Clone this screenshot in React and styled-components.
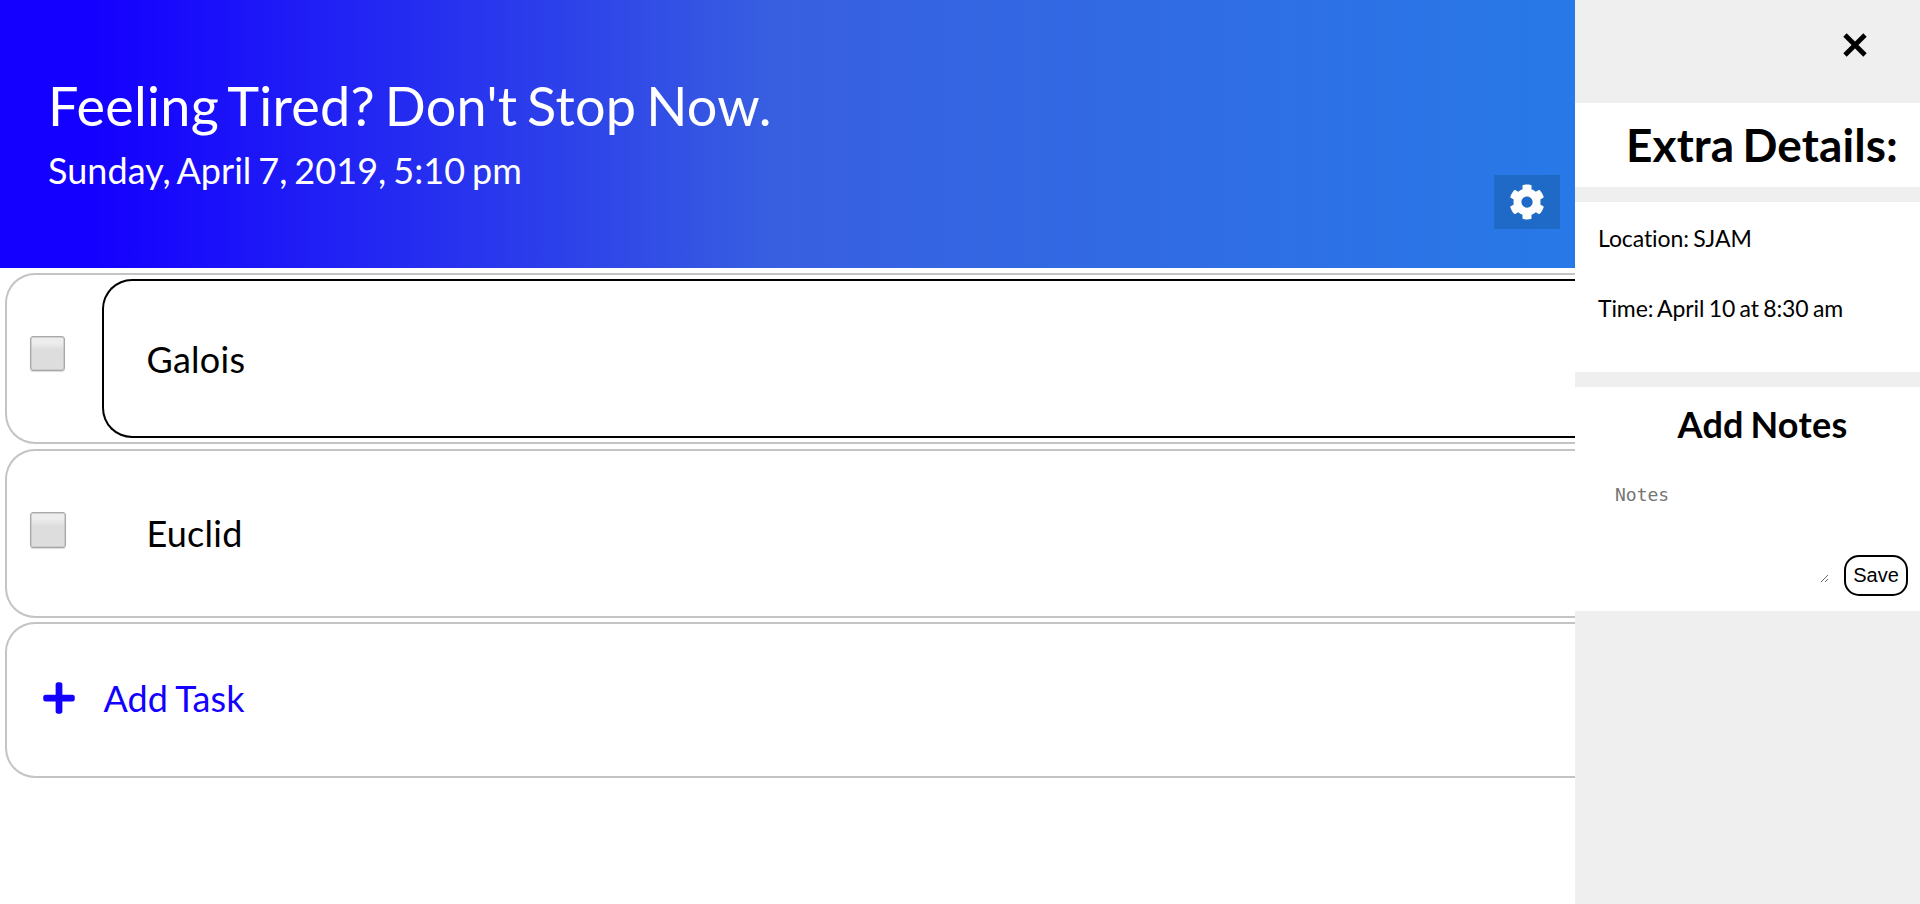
import React from "react";
import styled, { createGlobalStyle } from "styled-components";
import { FaCog, FaPlus } from "react-icons/fa";

const GlobalStyle = createGlobalStyle`
  * { box-sizing: border-box; }
  body { margin: 0; background: #fff; color: #000; font-family: Lato, sans-serif; font-variant-ligatures: none; word-spacing: -0.065em; }
  h1, h2, h3, p { margin: 0; }
`;

const Page = styled.div`
  display: flex;
  height: 904px;
  overflow: hidden;
`;

const Main = styled.main`
  flex: 0 0 1575px;
  overflow: hidden;
`;

const Header = styled.header`
  display: flex;
  justify-content: space-between;
  height: 268px;
  padding: 73px 15px 0 48px;
  color: #fff;
  background: linear-gradient(to right, #1400ff 0, #1400ff 96px, #385fe0 776px, #2879e8 1575px);
`;

const Title = styled.h1`
  font-size: 54px;
  font-weight: 400;
  line-height: 65px;
  letter-spacing: 0.27px;
  word-spacing: -0.08em;
  white-space: nowrap;
`;

const DateLine = styled.p`
  margin-top: 10px;
  font-size: 36px;
  line-height: 44px;
  letter-spacing: 0.05px;
  word-spacing: -0.065em;
`;

const SettingsButton = styled.button`
  display: flex;
  align-items: center;
  justify-content: center;
  width: 66px;
  height: 54px;
  margin-top: 102px;
  padding: 0 0 1px;
  border: 0;
  color: #fff;
  background: #1f6ac6;
  font-size: 36px;
`;

const List = styled.div`
  display: flex;
  flex-direction: column;
  padding: 5px 0 0 5px;
`;

const Row = styled.div`
  display: flex;
  align-items: flex-start;
  height: ${(p) => p.$height}px;
  margin-bottom: ${(p) => p.$gap || 0}px;
  border: 2px solid #c4c4c4;
  border-right: 0;
  border-radius: 30px 0 0 30px;
`;

const Checkbox = styled.span`
  flex: none;
  width: ${(p) => p.$size}px;
  height: ${(p) => p.$size}px;
  margin: 61px 0 0 23px;
  border: 1px solid #a9a9a9;
  border-radius: 3px;
  background: linear-gradient(#ededed, #ededed 18%, #dcdcdc 40%, #dedede);
  box-shadow: inset 0 0 0 0.5px #b5b5b5, 0 1px 1px rgba(0, 0, 0, 0.15);
`;

const Task = styled.div`
  flex: 1;
  height: 159px;
  margin: 4px 0 0 ${(p) => p.$left}px;
  padding: ${(p) => p.$top}px 0 0 42.5px;
  border: 2px solid ${(p) => (p.$active ? "#000" : "transparent")};
  border-right: 0;
  border-radius: 30px 0 0 30px;
  font-size: 36px;
  letter-spacing: 0.25px;
  line-height: 44px;
`;

const AddTask = styled.div`
  display: flex;
  align-items: center;
  gap: 27px;
  padding: 52px 0 0 33.5px;
  color: #1400ff;
  font-size: 36px;
  line-height: 44px;
  letter-spacing: 0.1px;
`;

const Sidebar = styled.aside`
  display: flex;
  flex: 1;
  flex-direction: column;
  gap: 15px;
  background: #efefef;
`;

const CloseBar = styled.div`
  display: flex;
  justify-content: flex-end;
  height: 88px;
  padding: 33px 53px 0 0;
`;

const CloseIcon = () => (
  <svg width="24" height="24" viewBox="0 0 24 24" fill="none" stroke="#000" strokeWidth="4.8">
    <path d="M2 2 22 22M22 2 2 22" />
  </svg>
);

const Panel = styled.section`
  height: ${(p) => p.$height}px;
  background: #fff;
`;

const PanelTitle = styled.h2`
  padding: 15px 22px 0 0;
  font-size: 46px;
  font-weight: 700;
  line-height: 54px;
  letter-spacing: 0.1px;
  word-spacing: -0.065em;
  text-align: right;
`;

const Detail = styled.p`
  padding: 24px 0 22px 23px;
  font-size: 23px;
  line-height: 24px;
  letter-spacing: -0.08px;
  word-spacing: -0.065em;
`;

const NotesTitle = styled.h3`
  padding: 15px 0 0 30px;
  font-size: 36px;
  line-height: 44px;
  letter-spacing: 0.25px;
  word-spacing: -0.065em;
  text-align: center;
`;

const NotesForm = styled.div`
  display: flex;
  align-items: flex-end;
  padding: 33px 12px 0 35px;
`;

const NotesInput = styled.textarea`
  width: 219px;
  height: 104px;
  margin-bottom: 13px;
  padding: 4px 5px;
  border: 0;
  outline: 0;
  background: transparent;
  font: 18px/24px "DejaVu Sans Mono", monospace;
  &::placeholder { color: #757575; }
`;

const SaveButton = styled.button`
  width: 64px;
  height: 41px;
  margin-left: auto;
  padding: 0;
  border: 2px solid #000;
  border-radius: 15px;
  color: #000;
  background: #fff;
  font: 20px "Liberation Sans", sans-serif;
`;

export default function App() {
  return (
    <>
      <GlobalStyle />
      <Page>
        <Main>
          <Header>
            <div>
              <Title>Feeling Tired? Don't Stop Now.</Title>
              <DateLine>Sunday, April 7, 2019, 5:10 pm</DateLine>
            </div>
            <SettingsButton aria-label="Settings"><FaCog /></SettingsButton>
          </Header>
          <List>
            <Row $height={171} $gap={5}>
              <Checkbox $size={35} />
              <Task $active $left={37} $top={56}>Galois</Task>
            </Row>
            <Row $height={169} $gap={4}>
              <Checkbox $size={36} />
              <Task $left={36} $top={54}>Euclid</Task>
            </Row>
            <Row $height={156}>
              <AddTask><FaPlus /><span>Add Task</span></AddTask>
            </Row>
          </List>
        </Main>
        <Sidebar>
          <CloseBar><CloseIcon /></CloseBar>
          <Panel $height={84}><PanelTitle>Extra Details:</PanelTitle></Panel>
          <Panel $height={170}>
            <Detail>Location: SJAM</Detail>
            <Detail>Time: April 10 at 8:30 am</Detail>
          </Panel>
          <Panel $height={224}>
            <NotesTitle>Add Notes</NotesTitle>
            <NotesForm>
              <NotesInput placeholder="Notes" />
              <SaveButton>Save</SaveButton>
            </NotesForm>
          </Panel>
        </Sidebar>
      </Page>
    </>
  );
}
